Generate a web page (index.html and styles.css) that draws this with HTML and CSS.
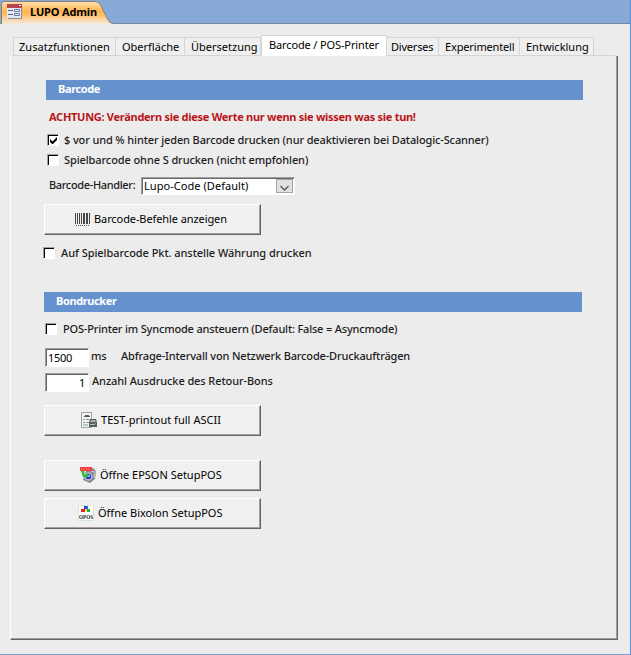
FILE: index.html
```html
<!DOCTYPE html>
<html lang="de">
<head>
<meta charset="utf-8">
<title>LUPO Admin</title>
<link rel="stylesheet" href="styles.css">
</head>
<body>
<div class="window">
  <header class="titlebar">
    <svg class="doc-tab" width="114" height="24" viewBox="0 0 114 24">
      <defs>
        <linearGradient id="tabfill" x1="0" y1="0" x2="0" y2="1">
          <stop offset="0" stop-color="#ffe2b8"/><stop offset=".2" stop-color="#ffcb82"/>
          <stop offset=".45" stop-color="#ffb450"/><stop offset=".62" stop-color="#ffc36f"/><stop offset="1" stop-color="#f3ebe0"/>
        </linearGradient>
      </defs>
      <path d="M1.5 24V4Q1.500 1.500 4 1.500H95Q98.500 1.500 100.500 5L107 18Q109.500 23.500 113 23.500V24Z" fill="url(#tabfill)"/>
      <path d="M1.500 24V4Q1.500 1.500 4 1.500H95Q98.500 1.500 100.500 5L107 18Q109.500 23.500 113 23.500" fill="none" stroke="#8d7f70"/>
      <rect x="7" y="4" width="15" height="15" fill="#e4e8f1"/>
      <path d="M7 4h15v4H7z" fill="#b7434d"/><path d="M19 5h2v1h-2z" fill="#fff"/>
      <path d="M21.500 8v10.500H8" fill="none" stroke="#8491ad"/>
      <path d="M8 10h5v1H8zM8 14h5v1H8z" fill="#56678b"/>
      <path d="M14.500 9.500h5v2h-5zM14.500 13.500h5v2h-5z" fill="#fff" stroke="#65769b"/>
    </svg>
    <span class="doc-title">LUPO Admin</span>
  </header>
  <nav class="tabs">
    <span class="tab t1">Zusatzfunktionen</span>
    <span class="tab t2">Oberfläche</span>
    <span class="tab t3">Übersetzung</span>
    <span class="tab active">Barcode / POS-Printer</span>
    <span class="tab t5">Diverses</span>
    <span class="tab t6">Experimentell</span>
    <span class="tab t7">Entwicklung</span>
    <span class="tabs-rest"></span>
  </nav>
  <main class="panel">
    <h2 class="section first">Barcode</h2>
    <p class="warning">ACHTUNG: Verändern sie diese Werte nur wenn sie wissen was sie tun!</p>
    <div class="check c1"><i class="box"><svg width="9" height="9" viewBox="0 0 9 9"><path d="M1 3v3l2 2h1l4-4V1L3.500 5.500z"/></svg></i><span>$ vor und % hinter jeden Barcode drucken (nur deaktivieren bei Datalogic-Scanner)</span></div>
    <div class="check c2"><i class="box"></i><span>Spielbarcode ohne S drucken (nicht empfohlen)</span></div>
    <div class="handler">
      <span class="handler-label">Barcode-Handler:</span>
      <div class="combo"><span>Lupo-Code (Default)</span><i class="arrow"><svg width="9" height="6" viewBox="0 0 9 6"><path d="M.5 1l4 4 4-4" fill="none" stroke="#555" stroke-width="1.300"/></svg></i></div>
    </div>
    <div class="button b1">
      <svg width="15" height="13" viewBox="0 0 15 13"><path d="M0 0h1v11H0zM2 0h1v11H2zM4 0h1v11H4zM6 0h1v11H6zM8 0h2v11H8zM11 0h1v11h-1zM12 0h1v11h-1zM14 0h1v11h-1z" fill="#4b4544"/><path d="M1 12.500h13" stroke="#555" stroke-dasharray="1 1"/></svg>
      <span>Barcode-Befehle anzeigen</span>
    </div>
    <div class="check c3"><i class="box"></i><span>Auf Spielbarcode Pkt. anstelle Währung drucken</span></div>
    <h2 class="section second">Bondrucker</h2>
    <div class="check c4"><i class="box"></i><span>POS-Printer im Syncmode ansteuern (Default: False = Asyncmode)</span></div>
    <div class="field f1"><span class="input">1500</span><span class="unit">ms</span><span class="desc">Abfrage-Intervall von Netzwerk Barcode-Druckaufträgen</span></div>
    <div class="field f2"><span class="input right">1</span><span class="count">Anzahl Ausdrucke des Retour-Bons</span></div>
    <div class="button b2">
      <svg width="16" height="16" viewBox="0 0 16 16">
        <path d="M.5.5h10v15H.5z" fill="#f1f4f2" stroke="#9aa5a1"/>
        <path d="M3 4.500h6M4 3.500h4" stroke="#555b59"/><path d="M2 7.500h2M5 7.500h3M2 10.500h2M5 10.500h3M2 13h5" stroke="#8a9491"/>
        <path d="M9 7.500h6v4H9z" fill="#aab1af" stroke="#4f5856"/><path d="M8 10h8v5H8z" fill="#59615f"/><path d="M9 12.500h5" stroke="#b5bcba"/><path d="M14 11h1v1h-1z" fill="#5ecb5e"/>
      </svg>
      <span>TEST-printout full ASCII</span>
    </div>
    <div class="button b3">
      <svg width="16" height="16" viewBox="0 0 16 16">
        <path d="M6 4l7-3 3 3-1 8-5 4-7-3z" fill="#85868c"/><path d="M11 4l4 1-1 6" fill="none" stroke="#b9bac0" stroke-width="1.500"/>
        <circle cx="8.500" cy="9.500" r="4.200" fill="#aeb3cc"/><circle cx="8.500" cy="9.500" r="2.600" fill="#2437c8"/><circle cx="9" cy="9" r="1" fill="#9cd8ff"/>
        <path d="M1 4h3l1 4 3-2v4L3 10z" fill="#25c436"/>
        <path d="M0 0h12v4H0z" fill="#f2413f"/><path d="M1 2h10" stroke="#ff9b94" stroke-dasharray="1 1.500"/>
      </svg>
      <span>Öffne EPSON SetupPOS</span>
    </div>
    <div class="button b4">
      <svg width="16" height="16" viewBox="0 0 16 16">
        <path d="M.5.5h15v15H.5z" fill="#fff" stroke="#d2e6db"/>
        <path d="M6 1h3v3H6z" fill="#2442d2"/><path d="M3 4h4v3H3z" fill="#e9252c"/><path d="M9 4h3v3H9z" fill="#27ad3e"/><path d="M8 1h2v3H8z" fill="#3c5ce0"/><path d="M7 4h2v2H7z" fill="#f2d82c"/>
        <text class="opos" x="1" y="14" textLength="14" lengthAdjust="spacingAndGlyphs">OPOS</text>
      </svg>
      <span>Öffne Bixolon SetupPOS</span>
    </div>
  </main>
</div>
</body>
</html>
```
FILE: styles.css
```css
* { box-sizing: border-box; }
body { margin: 0; font: 11px/16px "Noto Sans", "Open Sans", sans-serif; color: #000; }
.window { width: 631px; height: 655px; background: #ececec; border-right: 1px solid #5b8fd6; border-bottom: 1px solid #7c9cc4; display: flex; flex-direction: column; white-space: nowrap; overflow: hidden; }
.titlebar { height: 24px; width: 631px; flex: none; background: #87a9d7; border-bottom: 1px solid #7289a8; display: grid; }
.doc-tab { grid-area: 1 / 1; display: block; }
.doc-title { grid-area: 1 / 1; padding: 4px 0 0 30px; font-weight: bold; letter-spacing: -.15px; }
.tabs { display: flex; align-items: flex-end; height: 32px; padding-left: 13px; flex: none; }
.tab { height: 19px; border: 1px solid #d5d5d5; border-left-width: 0; background: #efefef; padding: 1px 0 0 4px; }
.t1 { width: 103px; border-left-width: 1px; padding-left: 5px; letter-spacing: .04px; }
.t2 { width: 69px; padding-left: 6px; }
.t3 { width: 76px; padding-left: 6px; }
.tab.active { width: 126px; height: 21px; background: #fff; border-left-width: 1px; border-bottom: 0; padding: 1px 0 0 7px; letter-spacing: -.13px; }
.t5 { width: 52px; letter-spacing: -.2px; }
.t6 { width: 81px; padding-left: 6px; letter-spacing: -.15px; }
.t7 { width: 74px; padding-left: 6px; }
.tabs-rest { width: 21px; height: 1px; background: #d5d5d5; }
.panel { margin-left: 10px; width: 608px; height: 584px; border: 0 solid #646464; border-width: 0 1px 1px 1px; border-left-color: #fff; box-shadow: inset -1px -1px #a0a0a0; padding-left: 33px; color: #1c1c1c; font-weight: 500; }
.section { margin: 0; width: 538px; height: 20px; background: #6592cf; color: #fff; font-size: 11px; line-height: 18px; padding-left: 12px; letter-spacing: -.38px; }
.first { margin: 24px 0 0 2px; width: 537px; }
.second { margin-top: 33px; }
.warning { margin: 9px 0 0 5px; height: 16px; color: #ba1419; font-weight: bold; letter-spacing: -.28px; }
.check { display: flex; align-items: center; height: 12px; }
.check span { margin-left: 5px; line-height: 12px; }
.box { flex: none; width: 12px; height: 12px; background: #fff; border: 1px solid; border-color: #a0a0a0 #fff #fff #a0a0a0; box-shadow: inset 1px 1px #000; }
.box svg { display: block; margin: 1px 0 0 1px; }
.c1 { margin: 9px 0 0 3px; letter-spacing: -.13px; }
.c2 { margin: 8px 0 0 3px; letter-spacing: -.1px; }
.c3 { margin: 12px 0 0 -1px; letter-spacing: -.06px; }
.c4 { margin: 11px 0 0 1px; letter-spacing: -.18px; }
.c3 span, .c4 span { margin-left: 6px; }
.handler { display: flex; height: 18px; margin: 11px 0 0 5px; line-height: 16px; }
.handler-label { width: 92px; letter-spacing: -.35px; }
.combo { display: flex; width: 154px; height: 18px; background: #fff; border: 1px solid; border-color: #a0a0a0 #fff #fff #a0a0a0; box-shadow: inset 1px 1px #696969; color: #000; padding-left: 2px; font-weight: 400; letter-spacing: .05px; }
.combo span { flex: 1; }
.arrow { width: 17px; height: 14px; margin: 1px 1px 0 0; background: #e1e1e1; border: 1px solid #a6a6a6; display: flex; align-items: center; justify-content: center; padding-top: 3px; }
.button { width: 217px; height: 31px; background: #f0f0f0; border: 1px solid; border-color: #fff #646464 #646464 #fff; box-shadow: inset -1px -1px #a0a0a0; color: #000; font-weight: 400; display: flex; align-items: center; padding-bottom: 1px; }
.button svg { flex: none; }
.b1 { margin-top: 9px; padding-left: 30px; letter-spacing: -.09px; }
.b2 { margin-top: 13px; padding-left: 36px; letter-spacing: .03px; }
.b3 { margin-top: 24px; padding-left: 35px; }
.b4 { margin-top: 7px; padding-left: 33px; }
.button span { margin-left: 4px; }
.opos { font: bold 6px "Liberation Serif", serif; fill: #222; letter-spacing: 0; }
.field { display: flex; height: 19px; margin-left: 1px; line-height: 16px; letter-spacing: -.16px; }
.f1 { margin-top: 13px; }
.f2 { margin-top: 6px; letter-spacing: -.09px; }
.input { width: 44px; background: #fff; color: #000; border: 1px solid; border-color: #a0a0a0 #fff #fff #a0a0a0; box-shadow: inset 1px 1px #646464; padding: 1px 3px 0 2px; font-weight: 400; letter-spacing: -.3px; }
.right { text-align: right; }
.unit { width: 29px; padding-left: 2px; }
.desc { padding-left: 3px; }
.count { padding-left: 3px; }
```
